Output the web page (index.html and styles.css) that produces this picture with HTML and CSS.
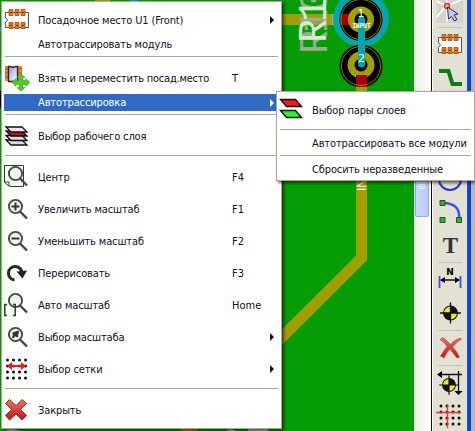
FILE: index.html
```html
<!DOCTYPE html>
<html lang="ru">
<head>
<meta charset="utf-8">
<title>Pcbnew</title>
<link rel="stylesheet" href="styles.css">
</head>
<body>
<svg class="defs" width="0" height="0" aria-hidden="true">
  <defs>
    <linearGradient id="redg" x1="0" y1="0" x2="0" y2="1"><stop offset="0" stop-color="#e87568"/><stop offset="1" stop-color="#c41410"/></linearGradient>
    <linearGradient id="chip" x1="0" y1="0" x2="1" y2="1"><stop offset="0" stop-color="#8f9be0"/><stop offset="1" stop-color="#fff"/></linearGradient>
    <symbol id="lens" viewBox="0 0 26 26"><path d="M16 15.500l7 7" stroke="#444" stroke-width="2.400"/><circle cx="11.500" cy="10.500" r="6.600" fill="#f1f3f1" stroke="#484848" stroke-width="1.900"/></symbol>
    <symbol id="module" viewBox="0 0 26 26"><path d="M1.500 5.500h23v15h-23v-5l2-2.500-2-2.500z" fill="#fff" stroke="#555"/><g fill="#e47b20" stroke="#a24a08" stroke-width=".8"><path d="M5 2.500h4v6H5zM11 2.500h4v6h-4zM17 2.500h4v6h-4zM5 15.500h4v6H5zM11 15.500h4v6h-4zM17 15.500h4v6h-4z"/></g><path d="M6 5.500h2M12 5.500h2M18 5.500h2M6 18.500h2M12 18.500h2M18 18.500h2" stroke="#713400"/></symbol>
    <symbol id="target" viewBox="0 0 26 26"><circle cx="13" cy="13" r="7.500" fill="#111"/><path d="M13 13V6.500A6.500 6.500 0 0 0 6.500 13zM13 13v6.500A6.500 6.500 0 0 0 19.500 13z" fill="#f0ea18"/><path d="M13 2.500v21M2.500 13h21" stroke="#111" stroke-width="1.300"/></symbol>
    <symbol id="dots" viewBox="0 0 26 26"><path d="M4 4h.01M10 4h.01M16 4h.01M22 4h.01M4 10h.01M10 10h.01M16 10h.01M22 10h.01M4 16h.01M10 16h.01M16 16h.01M22 16h.01M4 22h.01M10 22h.01M16 22h.01M22 22h.01" stroke="#111" stroke-width="3" stroke-linecap="round"/></symbol>
  </defs>
</svg>
<div class="window">
  <svg class="board" viewBox="0 0 414 431">
    <rect width="414" height="431" fill="#059d03"/>
    <path d="M0 27h1v5H0zM0 74h1v6H0z" fill="#05a5ad"/><path d="M0 91h1v17H0z" fill="#000"/>
    <path d="M95 0h15v2H95z" fill="#a0a005"/><path d="M130 0h8v2h-8z" fill="#05a5ad"/>
    <path d="M4 431q7-4 16 0zM226 431q5-4 10 0zM248 429h20v2h-20z" fill="#b5c5b5"/><path d="M181 429h16v2h-16z" fill="#a0a005"/>
    <path d="M270 14h63v11h-63z" fill="#a0a005"/>
    <path d="M332 14h8v11h-8z" fill="#aaa8b0"/>
    <g class="ref"><text transform="translate(327 54) rotate(-90)" fill="#99ad91">R10</text><text transform="translate(326 43) rotate(-90)" fill="#d5ecd0">R10</text></g>
    <path d="M315.500 20v6M312.500 23h6" stroke="#9b96b0"/>
    <circle cx="361" cy="19" r="28" fill="#05a5ad"/>
    <circle cx="361" cy="19.500" r="21.500" fill="#000"/><path d="M340 14h15v11h-15z" fill="#a80000"/>
    <circle cx="361" cy="19.500" r="13" fill="#a0a005"/><circle cx="361" cy="19.500" r="6.500" fill="#000"/>
    <circle cx="361" cy="19.500" r="20" fill="none" stroke="#a0a005" stroke-width=".8"/>
    <circle cx="361" cy="66" r="21.500" fill="#000"/>
    <circle cx="361" cy="65" r="13.500" fill="#a0a005"/><circle cx="361" cy="65" r="6.500" fill="#000"/>
    <path d="M356 75h11v12h-11z" fill="#a80000"/><circle cx="361" cy="66" r="19.500" fill="none" stroke="#a0a005" stroke-width=".8"/>
    <path d="M361.500 20v44" stroke="#05a5ad" stroke-width="7" stroke-linecap="round"/>
    <path d="M361.500 87v171L270 349" fill="none" stroke="#a0a005" stroke-width="11"/>
    <text class="pin" x="361" y="17">1</text><text class="pin" x="361.500" y="62">2</text>
    <text class="net" x="361.500" y="28" textLength="18" lengthAdjust="spacingAndGlyphs">INPUT</text>
    <text class="track" transform="translate(365.500 191) rotate(-90)">INPUT</text>
  </svg>
  <div class="scrollbar"><div class="thumb"><i></i><i></i><i></i><i></i></div></div>
  <div class="toolbar">
    <svg viewBox="0 0 34 431">
      <rect x="4" y="-4" width="26" height="27" fill="#d5d3ce"/>
      <path d="M13 6l-9-5M12 7L4 17M14 8v14M14 5V0M16 5l12-5" stroke="#fff" stroke-width="1.500"/><circle cx="14" cy="6" r="2.500" fill="#f7b5ac" stroke="#ed2825" stroke-width="1.500"/>
      <path d="M14.500 7l1 12 3-2.500 3 4.500 2.500-1.500-3-4.500 4-1z" fill="#c5caf0" stroke="#29294c"/>
      <path d="M5 27.500h24M5 262.500h24M5 330.500h24M5 365.500h24" stroke="#c6c3b7"/>
      <use href="#module" x="4" y="32" width="26" height="26"/>
      <path d="M6 71h9.500l4 13H29" fill="none" stroke="#087f12" stroke-width="4"/>
      <circle cx="17" cy="179" r="11" fill="none" stroke="#2637d7" stroke-width="2"/>
      <path d="M10 203q18 0 16 17" fill="none" stroke="#454bed" stroke-width="2.500"/><path d="M7 200.500h5v5H7zM7 217.500h5v5H7zM23.500 217.500h5v5h-5z" fill="#37ad37" stroke="#255425"/>
      <text class="tool-t" x="17.500" y="252.500">T</text><text class="tool-n" x="17" y="275">N</text>
      <path d="M6.500 276v12M27.500 276v12" stroke="#444ced" stroke-width="1.800"/><path d="M8 280h18" stroke="#111" stroke-width="1.500"/><path d="M7 280l5-3v6zM27 280l-5-3v6z"/>
      <use href="#target" x="4.500" y="300" width="26" height="26"/>
      <path d="M7 339.500l3-2q5 4 7.500 7 4-5 10-6.500l1 1q-6 4-9 8 4 4 7 10l-2.500 1q-4-5-7-9-4 4-6 9l-3.500-2q3-5 6.500-9.500-2-4-7-7z" fill="url(#redg)" stroke="#b83b34" stroke-width=".6"/>
      <use href="#target" x="4" y="373" width="24" height="24"/><path d="M7 374.500h22M25.500 371v20" stroke="#111" stroke-width="1.300"/><path d="M4 374.500l5-3.500v7zM25.500 395l-4-4h8z"/>
      <use href="#dots" x="4" y="402" width="26" height="26"/><path d="M3 412.500h25M14.500 404v24" stroke="#e83838" stroke-width="1.300"/>
    </svg>
  </div>
  <div class="frame"></div><div class="outside"></div>
</div>

<div class="menu context">
  <div class="item"><svg class="icon" viewBox="0 0 26 26"><use href="#module"/></svg><span class="label">Посадочное место U1 (Front)</span><i class="arrow"></i></div>
  <div class="item short"><span class="label">Автотрассировать модуль</span></div>
  <hr>
  <div class="item"><svg class="icon" viewBox="0 0 26 26"><path d="M1 1h17v15H1z" fill="#e8822b"/><path d="M1 4h17M1 8h17M1 12h17" stroke="#b25a16"/><path d="M4.500 1.500h2q2.500 2 5 0h2v15h-9z" fill="url(#chip)" stroke="#222" stroke-width="1.300"/><path d="M17 10l4 4h-2v3h3v-2l4 4-4 4v-2h-3v3h2l-4 4-4-4h2v-3h-3v2l-4-4 4-4v2h3v-3h-2z" transform="translate(0 -1.500)" fill="#59c52a" stroke="#3f9b29" stroke-width=".6"/></svg><span class="label long">Взять и переместить посад.место</span><span class="key">T</span></div>
  <div class="item short selected"><span class="label">Автотрассировка</span><i class="arrow"></i></div>
  <hr>
  <div class="item"><svg class="icon" viewBox="0 0 26 26"><g stroke="#111" stroke-width="1.300"><path d="M2 17h16l5 5H7z" fill="#ddd"/><path d="M2 12.500h16l5 5H7z" fill="#ddd"/><path d="M2 8h16l5 5H7z" fill="#b3131b"/><path d="M2 4h16l5 5H7z" fill="#e7e7e7"/></g></svg><span class="label">Выбор рабочего слоя</span></div>
  <hr>
  <div class="item"><svg class="icon" viewBox="0 0 26 26"><path d="M.5 1.500h19v21h-14l-5-4zM1 18h4v4" fill="#fff" stroke="#333"/><use href="#lens" y="-1"/></svg><span class="label">Центр</span><span class="key">F4</span></div>
  <div class="item"><svg class="icon" viewBox="0 0 26 26"><use href="#lens"/><path d="M7.500 10.500h8M11.500 6.500v8" stroke="#333" stroke-width="2"/></svg><span class="label">Увеличить масштаб</span><span class="key">F1</span></div>
  <div class="item"><svg class="icon" viewBox="0 0 26 26"><use href="#lens"/><path d="M7.500 10.500h8" stroke="#333" stroke-width="2"/></svg><span class="label">Уменьшить масштаб</span><span class="key">F2</span></div>
  <div class="item"><svg class="icon" viewBox="0 0 26 26"><path d="M10.500 20A6.800 6.800 0 1 1 18 13" fill="none" stroke="#282828" stroke-width="3"/><path d="M12.500 11.500l10.500-1-4.500 8z" fill="#222"/></svg><span class="label">Перерисовать</span><span class="key">F3</span></div>
  <div class="item"><svg class="icon" viewBox="0 0 26 26"><use href="#lens" y="-2"/><path d="M3 12.500H.8v11H3M9 12.500h2.200v11H9" fill="none" stroke="#333" stroke-width="1.500"/></svg><span class="label">Авто масштаб</span><span class="key">Home</span></div>
  <div class="item"><svg class="icon" viewBox="0 0 26 26"><use href="#lens"/><path d="M8.500 14l1-4-1-1 6-2-1 6-2-1z" fill="#333" stroke="#333"/></svg><span class="label">Выбор масштаба</span><i class="arrow"></i></div>
  <div class="item"><svg class="icon" viewBox="0 0 26 26"><use href="#dots" x="-.5"/><path d="M5 10h15" stroke="#ed1b1b" stroke-width="2"/><path d="M3 10l5-4v8zM22 10l-5-4v8z" fill="#ed1b1b"/></svg><span class="label">Выбор сетки</span><i class="arrow"></i></div>
  <hr>
  <div class="item"><svg class="icon" viewBox="0 0 26 26"><path d="M5.500 2.500l6.500 6 6-6 4.500 4-6 6 6 6-4.500 4.500-6-6-6.500 6-4-4.500 6-6-6-6z" fill="url(#redg)" stroke="#a32924"/></svg><span class="label">Закрыть</span></div>
</div>

<div class="menu submenu">
  <div class="item"><svg class="icon" viewBox="0 0 26 26"><path d="M1.500 2.500h15l6 7h-15z" fill="#f31818" stroke="#111" stroke-width="1.400"/><path d="M1.500 13.500h15l6 7h-15z" fill="#28f32c" stroke="#111" stroke-width="1.400"/></svg><span class="label">Выбор пары слоев</span></div>
  <hr>
  <div class="item short"><span class="label">Автотрассировать все модули</span></div>
  <hr>
  <div class="item short"><span class="label">Сбросить неразведенные</span></div>
</div>
</body>
</html>
```
FILE: styles.css
```css
* { box-sizing: border-box; }
body { margin: 0; width: 475px; height: 431px; overflow: hidden; position: relative; font: 11px/16px "DejaVu Sans Condensed", "DejaVu Sans", sans-serif; color: #101018; }
.defs { position: absolute; }
.window { display: flex; height: 431px; }
.board { width: 414px; height: 431px; flex: none; }
.ref text { font: 40px "Liberation Mono", monospace; letter-spacing: -3px; }
.pin { font: 11px "DejaVu Sans", sans-serif; fill: #fff; text-anchor: middle; }
.net { font: bold 7px "DejaVu Sans Mono", monospace; fill: #fff; text-anchor: middle; }
.track { font: 12px "Liberation Sans", sans-serif; fill: #f2f5e0; }
.scrollbar { width: 17px; flex: none; background: linear-gradient(90deg, #efeee8, #fdfdfa); padding: 100px 2px 0 1px; }
.thumb { height: 117px; border: 1px solid #8fabe5; border-radius: 2px; background: linear-gradient(90deg, #cad9fd, #b7cbfa); display: flex; flex-direction: column; align-items: center; justify-content: flex-end; gap: 1px; padding-bottom: 27px; }
.thumb i { width: 6px; height: 1px; background: #eef4fe; }
.toolbar { width: 36px; flex: none; border-left: 1px solid #111; background: #e3e0d4; box-shadow: inset 1px 0 #fff; padding-left: 1px; }
.toolbar svg { width: 34px; height: 431px; display: block; }
.tool-t { font: bold 23px "Liberation Serif", serif; text-anchor: middle; fill: #333; }
.tool-n { font: bold 9px "DejaVu Sans", sans-serif; text-anchor: middle; }
.frame { width: 4px; background: linear-gradient(90deg, #1653e7, #0036d2); }
.outside { width: 4px; background: #bcb8b1; }
.menu { position: absolute; background: #fff; border: 1px solid #aca899; padding: 2px; box-shadow: 2px 2px 3px rgba(0, 0, 0, .6); }
.context { left: 1px; top: 1px; width: 281px; height: 428px; }
.submenu { left: 276px; top: 91px; width: 199px; height: 90px; }
.item { display: flex; align-items: center; height: 32px; padding-right: 5px; white-space: nowrap; }
.icon { width: 26px; height: 26px; flex: none; }
.label { margin-left: 8px; flex: none; width: 194px; letter-spacing: -.13px; }
.long { letter-spacing: -.22px; }
.item:not(.short) .label, .key { padding-top: 1px; }
.short { height: 17px; padding-left: 34px; }
.short .label { margin-left: 0; }
.selected { background: #316ac5; color: #fff; }
.submenu .label { width: auto; }
.submenu .item { padding-right: 0; }
.submenu .short { padding-left: 33px; }
.submenu .icon + .label { margin-left: 7px; }
.arrow { margin-left: auto; border-left: 4px solid currentColor; border-top: 4px solid transparent; border-bottom: 4px solid transparent; }
hr { border: 0; height: 1px; margin: 3px 1px 5px; background: #aca899; }
```
